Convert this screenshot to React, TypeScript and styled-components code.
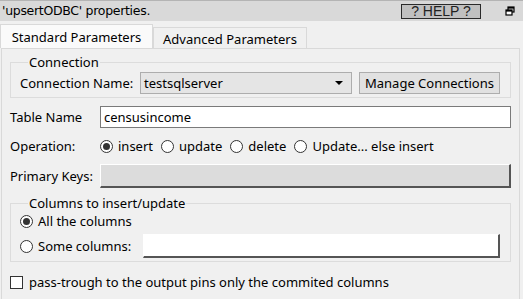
import styled, { createGlobalStyle } from "styled-components";

const GlobalStyle = createGlobalStyle`
  html, body {
    margin: 0;
    padding: 0;
    background: #f0f0f0;
    overflow: hidden;
  }
  body {
    font-family: "Noto Sans", "Liberation Sans", Arial, sans-serif;
    font-size: 13px;
    line-height: 16px;
    color: #000;
  }
`;

const App = () => {
  return (
    <Window>
      <GlobalStyle />
      <TitleBar>
        <Title>'upsertODBC' properties.</Title>
        <HelpButton>? HELP ?</HelpButton>
        <FloatIcon viewBox="0 0 10 10" width="10" height="10">
          <rect x="3" y="1" width="6" height="5" fill="none" stroke="#000" strokeWidth="1.2" />
          <rect x="1" y="4" width="6" height="5" fill="#fff" stroke="#000" strokeWidth="1.2" />
          <rect x="3" y="1" width="6" height="1.6" fill="#000" />
          <rect x="1" y="4" width="6" height="1.6" fill="#000" />
        </FloatIcon>
      </TitleBar>

      <TabBar>
        <Tab active>Standard Parameters</Tab>
        <Tab>Advanced Parameters</Tab>
      </TabBar>

      <Panel>
        <Group>
          <Legend>Connection</Legend>
          <Row>
            <InlineLabel>Connection Name:</InlineLabel>
            <Combo>
              <span>testsqlserver</span>
              <Arrow />
            </Combo>
            <Button>Manage Connections</Button>
          </Row>
        </Group>

        <FormRow>
          <FieldLabel>Table Name</FieldLabel>
          <TextInput>censusincome</TextInput>
        </FormRow>

        <FormRow>
          <FieldLabel>Operation:</FieldLabel>
          <Options>
            <Option>
              <Radio checked />
              insert
            </Option>
            <Option>
              <Radio />
              update
            </Option>
            <Option>
              <Radio />
              delete
            </Option>
            <Option>
              <Radio />
              Update... else insert
            </Option>
          </Options>
        </FormRow>

        <FormRow>
          <FieldLabel>Primary Keys:</FieldLabel>
          <KeysButton />
        </FormRow>

        <ColumnsGroup>
          <Legend>Columns to insert/update</Legend>
          <Option>
            <Radio checked />
            All the columns
          </Option>
          <SomeRow>
            <Option>
              <Radio />
              Some columns:
            </Option>
            <ColumnsField />
          </SomeRow>
        </ColumnsGroup>

        <CheckRow>
          <Checkbox />
          pass-trough to the output pins only the commited columns
        </CheckRow>
      </Panel>
    </Window>
  );
};

const Window = styled.div`
  width: 523px;
  height: 299px;
  display: flex;
  flex-direction: column;
  background: #f0f0f0;
  overflow: hidden;
  white-space: nowrap;
`;

const TitleBar = styled.div`
  height: 20px;
  border-top: 1px solid #b4b4b4;
  background: #d9d9d9;
  display: flex;
  align-items: center;
  padding: 0 0 0 2px;
`;

const Title = styled.div`
  flex: 1;
  font-family: "DejaVu Sans", sans-serif;
  font-size: 12.5px;
  letter-spacing: -0.3px;
`;

const HelpButton = styled.div`
  width: 78px;
  height: 13px;
  border: 1px solid #2a2a2a;
  background: #c0c0c0;
  font-family: "Liberation Sans", Arial, sans-serif;
  font-size: 14px;
  line-height: 13px;
  text-align: center;
  color: #222;
  margin-right: 24px;
`;

const FloatIcon = styled.svg`
  margin-right: 8px;
`;

const TabBar = styled.div`
  height: 27px;
  display: flex;
  align-items: flex-end;
`;

const Tab = styled.div<{ active?: boolean }>`
  height: ${(p) => (p.active ? "24px" : "21px")};
  width: ${(p) => (p.active ? "153px" : "154px")};
  box-sizing: border-box;
  border: 1px solid #d9d9d9;
  border-bottom: none;
  background: ${(p) => (p.active ? "#fafafa" : "#f0f0f0")};
  display: flex;
  align-items: center;
  justify-content: center;
  padding-top: ${(p) => (p.active ? "0" : "1px")};
`;

const Panel = styled.div`
  flex: 1;
  margin: 0 3px 0 1px;
  border: 1px solid #d9d9d9;
  border-bottom: none;
  padding: 0 8px 0 8px;
  display: flex;
  flex-direction: column;
`;

const Group = styled.fieldset`
  margin: 6px 0 0 0;
  padding: 2px 0 3px 9px;
  border: 1px solid #dcdcdc;
  min-width: 0;
`;

const ColumnsGroup = styled(Group)`
  margin-top: 8px;
  padding: 0 10px 3px 9px;
  display: flex;
  flex-direction: column;
  gap: 3px;
`;

const Legend = styled.legend`
  padding: 0 1px;
  margin-left: 8px;
  line-height: 15px;
`;

const Row = styled.div`
  display: flex;
  align-items: center;
`;

const InlineLabel = styled.span`
  width: 120px;
  flex-shrink: 0;
`;

const Combo = styled.div`
  width: 212px;
  height: 22px;
  box-sizing: border-box;
  border: 1px solid #adadad;
  background: #e5e5e5;
  display: flex;
  align-items: center;
  justify-content: space-between;
  padding: 0 8px 0 3px;
  margin-right: 7px;
`;

const Arrow = styled.span`
  width: 0;
  height: 0;
  border-left: 4px solid transparent;
  border-right: 4px solid transparent;
  border-top: 4px solid #000;
`;

const Button = styled.div`
  width: 141px;
  height: 22px;
  box-sizing: border-box;
  border: 1px solid #adadad;
  background: #e1e1e1;
  display: flex;
  align-items: center;
  justify-content: center;
`;

const FormRow = styled.div`
  display: flex;
  align-items: center;
  margin-top: 8px;
`;

const FieldLabel = styled.span`
  width: 90px;
  flex-shrink: 0;
`;

const TextInput = styled.div`
  flex: 1;
  height: 22px;
  box-sizing: border-box;
  border: 1px solid #7a7a7a;
  background: #fff;
  display: flex;
  align-items: center;
  padding-left: 3px;
`;

const Options = styled.div`
  display: flex;
  align-items: center;
  gap: 8px;
`;

const Option = styled.label`
  display: flex;
  align-items: center;
  gap: 5px;
  height: 20px;
`;

const Radio = styled.span<{ checked?: boolean }>`
  width: 13px;
  height: 13px;
  box-sizing: border-box;
  border-radius: 50%;
  border: 1px solid #333;
  background: #fff;
  display: flex;
  align-items: center;
  justify-content: center;

  &::after {
    content: "";
    width: 7px;
    height: 7px;
    border-radius: 50%;
    background: ${(p) => (p.checked ? "#333" : "transparent")};
  }
`;

const KeysButton = styled.div`
  flex: 1;
  height: 24px;
  box-sizing: border-box;
  background: #dcdcdc;
  border-top: 1px solid #fff;
  border-left: 1px solid #fff;
  border-right: 2px solid #555;
  border-bottom: 2px solid #555;
`;

const SomeRow = styled.div`
  display: flex;
  align-items: center;
  gap: 12px;
`;

const ColumnsField = styled.div`
  flex: 1;
  height: 24px;
  box-sizing: border-box;
  background: #fff;
  border-top: 1px solid #fff;
  border-left: 1px solid #fff;
  border-right: 2px solid #555;
  border-bottom: 2px solid #555;
`;

const CheckRow = styled.label`
  display: flex;
  align-items: center;
  gap: 6px;
  margin-top: 12px;
`;

const Checkbox = styled.span`
  width: 13px;
  height: 13px;
  box-sizing: border-box;
  border: 1px solid #333;
  background: #fff;
`;

export default App;
